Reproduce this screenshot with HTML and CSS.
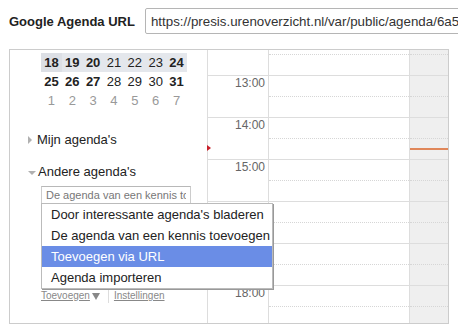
FILE: index.html
```html
<!DOCTYPE html>
<html lang="nl">
<head>
    <meta charset="UTF-8">
    <meta name="viewport" content="width=device-width, initial-scale=1.0">
    <title>Google Agenda URL</title>
    <link rel="stylesheet" href="styles.css">
</head>
<body>
    <div class="url-bar">
        <label class="url-label" for="url">Google Agenda URL</label>
        <input class="url-input" id="url" type="text" value="https://presis.urenoverzicht.nl/var/public/agenda/6a54f0c2e1b8d7a3/basic.ics">
    </div>

    <div class="shot">
        <div class="side">
            <table class="mini-cal">
                <tr class="week-now">
                    <td class="b first">18</td><td class="b">19</td><td class="b">20</td><td>21</td><td>22</td><td>23</td><td class="b">24</td>
                </tr>
                <tr>
                    <td class="b">25</td><td class="b">26</td><td class="b">27</td><td>28</td><td>29</td><td>30</td><td class="b">31</td>
                </tr>
                <tr class="next">
                    <td>1</td><td>2</td><td>3</td><td>4</td><td>5</td><td>6</td><td>7</td>
                </tr>
            </table>

            <div class="group group-mine"><span class="tri-right"></span>Mijn agenda's</div>
            <div class="group group-other"><span class="tri-down"></span>Andere agenda's</div>

            <input class="friend-input" type="text" placeholder="De agenda van een kennis toevoegen">

            <div class="links">
                <a href="#">Toevoegen</a><span class="caret"></span>
                <span class="sep"></span>
                <a href="#">Instellingen</a>
            </div>
        </div>

        <div class="grid">
            <div class="hours">
                <div class="hour"><div class="t">12:00</div><div class="day"><div class="half"></div></div><div class="day today"><div class="half"></div></div></div>
                <div class="hour"><div class="t">13:00</div><div class="day"><div class="half"></div></div><div class="day today"><div class="half"></div></div></div>
                <div class="hour"><div class="t">14:00</div><div class="day"><div class="half"></div></div><div class="day today"><div class="half"></div></div></div>
                <div class="hour"><div class="t">15:00</div><div class="day"><div class="half"></div></div><div class="day today"><div class="half"></div></div></div>
                <div class="hour"><div class="t"></div><div class="day"><div class="half"></div></div><div class="day today"><div class="half"></div></div></div>
                <div class="hour"><div class="t"></div><div class="day"><div class="half"></div></div><div class="day today"><div class="half"></div></div></div>
                <div class="hour"><div class="t">18:00</div><div class="day"><div class="half"></div></div><div class="day today"><div class="half"></div></div></div>
            </div>
        </div>

        <span class="now-marker"></span>
        <span class="now-line"></span>

        <ul class="menu">
            <li>Door interessante agenda's bladeren</li>
            <li>De agenda van een kennis toevoegen</li>
            <li class="active">Toevoegen via URL</li>
            <li>Agenda importeren</li>
        </ul>
    </div>
</body>
</html>
```

FILE: styles.css
```css
body{
    margin: 0;
    width: 458px;
    height: 333px;
    overflow: hidden;
    background-color: #fff;
    font-family: "Liberation Sans", Arial, sans-serif;
    color: #222;
}

/* top row */
.url-bar{
    display: flex;
    align-items: center;
    gap: 10px;
    padding: 8px 0 0 9px;
    height: 26px;
    overflow: hidden;
}
.url-label{
    font-size: 13px;
    font-weight: bold;
    color: #222;
    white-space: nowrap;
}
.url-input{
    box-sizing: border-box;
    flex: none;
    width: 320px;
    height: 26px;
    margin: 0;
    padding: 0 5px;
    border: 1px solid #b5b5b5;
    border-radius: 2px;
    font-family: "Liberation Sans", Arial, sans-serif;
    font-size: 13.33px;
    color: #333;
}

/* the calendar picture */
.shot{
    position: relative;
    display: flex;
    box-sizing: border-box;
    width: 440px;
    height: 275px;
    margin: 15px 0 0 9px;
    border: 1px solid #ccc;
    overflow: hidden;
}
.side{
    flex: none;
    width: 197px;
    border-right: 1px solid #ddd;
}

.mini-cal{
    border-collapse: collapse;
    width: 146px;
    margin: 3px 0 0 31px;
    font-size: 13px;
}
.mini-cal td{
    height: 19px;
    padding: 0;
    text-align: center;
    color: #222;
}
.mini-cal .b{
    font-weight: bold;
}
.week-now td{
    background-color: #e4e7ec;
}
.week-now td.first{
    background-color: #dcdfe5;
}
.mini-cal .next td{
    color: #999;
}

.group{
    display: flex;
    align-items: center;
    padding-left: 18px;
    font-size: 13px;
    line-height: 16px;
    color: #222;
}
.group-mine{
    margin-top: 22px;
}
.group-other{
    margin-top: 16px;
}
.tri-right{
    width: 0;
    height: 0;
    margin-right: 5px;
    border-top: 4px solid transparent;
    border-bottom: 4px solid transparent;
    border-left: 4px solid #b0b0b0;
}
.tri-down{
    width: 0;
    height: 0;
    margin: 2px 2px 0 0;
    border-left: 4px solid transparent;
    border-right: 4px solid transparent;
    border-top: 4px solid #b0b0b0;
}

.friend-input{
    display: block;
    box-sizing: border-box;
    width: 150px;
    height: 18px;
    margin: 6px 0 0 31px;
    padding: 0 4px;
    border: 1px solid #ccc;
    border-top-color: #b8b8b8;
    font-family: "Liberation Sans", Arial, sans-serif;
    font-size: 11px;
}
.friend-input::placeholder{
    color: #777;
}

.links{
    display: flex;
    align-items: center;
    margin: 85px 0 0 31px;
    font-size: 10px;
    line-height: 12px;
}
.links a{
    color: #888;
}
.caret{
    width: 0;
    height: 0;
    margin: 1px 0 0 2px;
    border-left: 4px solid transparent;
    border-right: 4px solid transparent;
    border-top: 7px solid #888;
}
.sep{
    width: 1px;
    height: 14px;
    margin: 0 5px 0 8px;
    background-color: #ddd;
}

/* day grid */
.grid{
    flex: 1;
    overflow: hidden;
}
.hours{
    margin-top: -16px;
}
.hour{
    display: grid;
    grid-template-columns: 61px 141px 38px;
    box-sizing: border-box;
    height: 42px;
    border-bottom: 1px solid #ddd;
}
.t{
    border-right: 1px solid #ddd;
    padding-right: 3px;
    text-align: right;
    font-size: 12px;
    line-height: 14px;
    color: #666;
}
.day{
    border-right: 1px solid #ddd;
}
.day.today{
    border-right: none;
    background-color: #efefef;
}
.half{
    box-sizing: border-box;
    height: 21px;
    border-bottom: 1px dotted #d6d6d6;
}

/* current time */
.now-marker{
    position: absolute;
    left: 197px;
    top: 95px;
    width: 0;
    height: 0;
    border-top: 3px solid transparent;
    border-bottom: 3px solid transparent;
    border-left: 4px solid #c8202a;
}
.now-line{
    position: absolute;
    left: 400px;
    top: 98px;
    width: 38px;
    height: 2px;
    background-color: #e0875a;
}

/* popup menu */
.menu{
    position: absolute;
    left: 31px;
    top: 153px;
    width: 232px;
    box-sizing: border-box;
    margin: 0;
    padding: 0;
    list-style: none;
    background-color: #fff;
    border: 1px solid #bbb;
    box-shadow: 1px 1px 0 #999;
    font-size: 13px;
}
.menu li{
    height: 21px;
    padding-left: 9px;
    line-height: 21px;
    color: #222;
    white-space: nowrap;
}
.menu li.active{
    background-color: #6a8de6;
    color: #fff;
}
```
